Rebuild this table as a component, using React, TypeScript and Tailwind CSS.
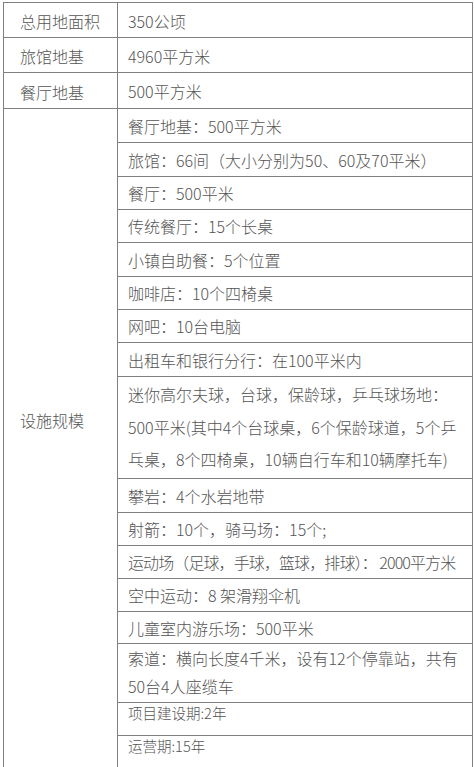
import { FC, ReactNode } from "react";

interface SubRow {
  h: string;
  content: ReactNode;
  cls?: string;
}

const topRows = [
  { label: "总用地面积", value: "350公顷", h: "h-[34px]", first: true },
  { label: "旅馆地基", value: "4960平方米", h: "h-[35px]" },
  { label: "餐厅地基", value: "500平方米", h: "h-[36px]" },
];

const facilities: SubRow[] = [
  { h: "h-[33px]", content: "餐厅地基：500平方米" },
  { h: "h-[34px]", content: "旅馆：66间（大小分别为50、60及70平米）" },
  { h: "h-[33px]", content: "餐厅：500平米" },
  { h: "h-[33px]", content: "传统餐厅：15个长桌" },
  { h: "h-[34px]", content: "小镇自助餐：5个位置" },
  { h: "h-[33px]", content: "咖啡店：10个四椅桌" },
  { h: "h-[33px]", content: "网吧：10台电脑" },
  { h: "h-[34px]", content: "出租车和银行分行：在100平米内" },
  {
    h: "h-[102px]",
    cls: "items-start pt-[1px] leading-[32.5px]",
    content: (
      <>
        迷你高尔夫球，台球，保龄球，乒乓球场地：
        <br />
        500平米(其中4个台球桌，6个保龄球道，5个乒
        <br />
        乓桌，8个四椅桌，10辆自行车和10辆摩托车)
      </>
    ),
  },
  { h: "h-[34px]", content: "攀岩：4个水岩地带" },
  { h: "h-[33px]", content: "射箭：10个，骑马场：15个;" },
  {
    h: "h-[33px]",
    cls: "items-center tracking-[-0.9px]",
    content: "运动场（足球，手球，篮球，排球）： 2000平方米",
  },
  { h: "h-[33px]", content: "空中运动：8 架滑翔伞机" },
  { h: "h-[32px]", content: "儿童室内游乐场：500平米" },
  {
    h: "h-[59px]",
    cls: "items-start leading-[28px]",
    content: (
      <>
        索道：横向长度4千米，设有12个停靠站，共有
        <br />
        50台4人座缆车
      </>
    ),
  },
  {
    h: "h-[33px]",
    cls: "items-start text-[14.5px] leading-[20px]",
    content: "项目建设期:2年",
  },
  {
    h: "h-[33px]",
    cls: "items-start text-[14.5px] leading-[20px]",
    content: "运营期:15年",
  },
];

const App: FC = () => {
  return (
    <div
      className="min-h-screen bg-white pt-[2px] pl-[3px] text-[16px] text-[#555555]"
      style={{ fontFamily: '"Noto Sans CJK SC", "Noto Sans", sans-serif' }}
    >
      <div className="w-[470px] border border-[#808080] font-light">
        {topRows.map((row, i) => (
          <div
            key={i}
            className={`flex ${row.h} ${row.first ? "" : "border-t border-[#808080]"}`}
          >
            <div className="flex w-[114px] shrink-0 items-center border-r border-[#808080] pl-[16px] pt-[2px]">
              {row.label}
            </div>
            <div className="flex flex-1 items-center pl-[10px] pt-[1px]">
              {row.value}
            </div>
          </div>
        ))}

        <div className="flex border-t border-[#808080]">
          <div className="flex w-[114px] shrink-0 items-center border-r border-[#808080] pb-[38px] pl-[16px]">
            设施规模
          </div>
          <div className="flex flex-1 flex-col">
            {facilities.map((row, i) => (
              <div
                key={i}
                className={`flex whitespace-nowrap pl-[10px] ${row.h} ${
                  i === 0 ? "" : "border-t border-[#808080]"
                } ${row.cls ?? "items-center"}`}
              >
                <div>{row.content}</div>
              </div>
            ))}
          </div>
        </div>
      </div>
    </div>
  );
};

export default App;
